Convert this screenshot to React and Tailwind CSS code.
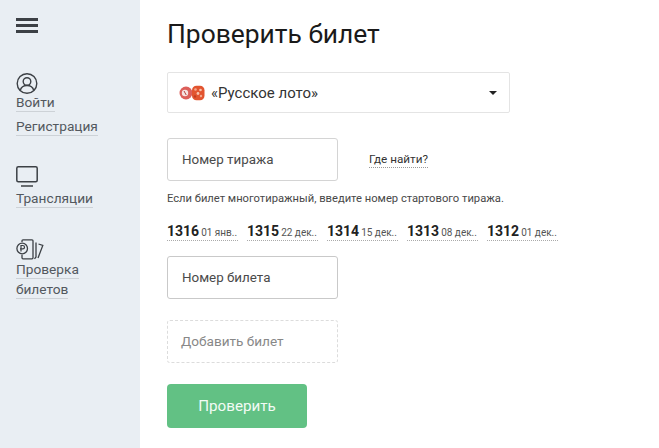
import React from 'react';

const draws = [
  { num: '1316', date: '01 янв..' },
  { num: '1315', date: '22 дек..' },
  { num: '1314', date: '15 дек..' },
  { num: '1313', date: '08 дек..' },
  { num: '1312', date: '01 дек..' },
];

function NavLink({ children }) {
  return (
    <span className="block text-[13.7px] leading-[17px] text-[#53585e] border-b border-[#cdd2d7]">{children}</span>
  );
}

function UserIcon() {
  return (
    <svg className="block" width="22" height="21" viewBox="0 0 22 21" fill="none" stroke="#3c4045" strokeWidth="1.4">
      <circle cx="11" cy="10.500" r="9.800" />
      <circle cx="11" cy="8.500" r="3.800" />
      <path d="M4.200 17.500c.8-3 3.800-5 6.800-5s6 2 6.800 5" />
    </svg>
  );
}

function TvIcon() {
  return (
    <svg className="block" width="22" height="21" viewBox="0 0 22 21" fill="none" stroke="#3c4045" strokeWidth="1.5">
      <rect x=".8" y=".8" width="20.400" height="14.900" rx="1.500" />
      <path d="M5 20h12" />
    </svg>
  );
}

function TicketsIcon() {
  return (
    <svg className="block" width="28" height="21" viewBox="0 0 28 21" fill="none" stroke="#3c4045" strokeWidth="1.3">
      <path d="M6 3V1.800c0-.6.400-1 1-1h9c.6 0 1 .4 1 1v17c0 .6-.4 1-1 1H7c-.6 0-1-.4-1-1v-3" />
      <path d="M20 3.500v14.500l-1.500 1.800" />
      <path d="M22.500 5l4.300 1.500-4.800 12.500" />
      <circle cx="6.200" cy="9.500" r="5.300" fill="#e9eef3" />
      <path d="M5 12.500v-6h1.800a1.700 1.700 0 010 3.400H4" strokeWidth="1.200" />
    </svg>
  );
}

function LotoIcon() {
  return (
    <svg className="block" width="26" height="16" viewBox="0 0 26 16">
      <circle cx="7" cy="8" r="6.500" fill="#dc5f5a" />
      <circle cx="6" cy="8" r="3.200" fill="#f6e4e2" />
      <path d="M5 6l2.200 4" stroke="#b5413c" strokeWidth="1" />
      <rect x="13" y=".8" width="12.500" height="14.500" rx="4.500" fill="#e2542f" />
      <circle cx="16.500" cy="4.500" r="1.300" fill="#f3a88e" />
      <circle cx="21.500" cy="5" r="1.300" fill="#f7c4ae" />
      <circle cx="19" cy="8.500" r="1.400" fill="#f7c4ae" />
      <circle cx="16" cy="11.500" r="1.200" fill="#c23c20" />
      <circle cx="22" cy="11" r="1.200" fill="#f3a88e" />
    </svg>
  );
}

function App() {
  return (
    <div className="flex w-[659px] h-[448px] overflow-hidden bg-white font-['Roboto',sans-serif] text-[#222]">
      <aside className="w-[140px] shrink-0 bg-[#e9eef3] pl-4 pt-[18px]">
        <div className="flex flex-col gap-[3px] w-[22px]">
          <div className="h-[3px] bg-[#3c4045]" />
          <div className="h-[3px] bg-[#3c4045]" />
          <div className="h-[3px] bg-[#3c4045]" />
        </div>

        <div className="mt-[40px] flex flex-col items-start">
          <UserIcon />
          <NavLink>Войти</NavLink>
          <div className="mt-[6px]">
            <NavLink>Регистрация</NavLink>
          </div>
        </div>

        <div className="mt-[30px] flex flex-col items-start">
          <TvIcon />
          <div className="mt-[3px]">
            <NavLink>Трансляции</NavLink>
          </div>
        </div>

        <div className="mt-[31px] flex flex-col items-start">
          <TicketsIcon />
          <div className="mt-[1px]">
            <NavLink>Проверка</NavLink>
          </div>
          <div className="mt-[2px]">
            <NavLink>билетов</NavLink>
          </div>
        </div>
      </aside>

      <main className="flex-1 pl-[27px] pt-[17px]">
        <h1 className="text-[26.4px] leading-[34px] font-normal text-[#1a1a1a]">Проверить билет</h1>

        <div className="mt-[21px] flex items-center w-[343px] h-[41px] border border-[#e4e4e4] rounded-[2px] pl-[11px] pr-[12px]">
          <LotoIcon />
          <span className="ml-[6px] pt-[1px] text-[15px] text-[#333]">«Русское лото»</span>
          <span className="ml-auto w-0 h-0 border-x-[4px] border-x-transparent border-t-[4px] border-t-[#222]" />
        </div>

        <div className="mt-[25px] flex items-center">
          <div className="flex items-center w-[171px] h-[43px] border border-[#d4d4d4] rounded-[3px] pl-[14px] pt-[2px] text-[13.4px] text-[#4a4a4a]">Номер тиража</div>
          <span className="ml-[31px] text-[11.7px] leading-[16px] text-[#333] border-b border-dotted border-[#999]">Где найти?</span>
        </div>

        <p className="mt-[11px] text-[11.2px] leading-[14px] text-[#484848]">Если билет многотиражный, введите номер стартового тиража.</p>

        <div className="mt-[17px] flex gap-[9px]">
          {draws.map((d) => (
            <div key={d.num} className="w-[71px] h-[18px] border-b border-dotted border-[#aaa] whitespace-nowrap leading-[16px]">
              <span className="text-[14px] font-bold text-[#222]">{d.num}</span>
              <span className="ml-[2px] text-[10px] text-[#555]">{d.date}</span>
            </div>
          ))}
        </div>

        <div className="mt-[15px] flex items-center w-[171px] h-[43px] border border-[#c9c9c9] rounded-[3px] pl-[14px] pt-[2px] text-[13.4px] text-[#4a4a4a]">Номер билета</div>

        <div className="mt-[21px] flex items-center w-[171px] h-[43px] border border-dashed border-[#dcdcdc] rounded-[3px] pl-[13px] text-[13.6px] text-[#888]">Добавить билет</div>

        <button className="mt-[21px] block w-[140px] h-[44px] rounded-[4px] bg-[#62c184] text-[15.2px] text-[#f2fbf5]">Проверить</button>
      </main>
    </div>
  );
}

export default App;
